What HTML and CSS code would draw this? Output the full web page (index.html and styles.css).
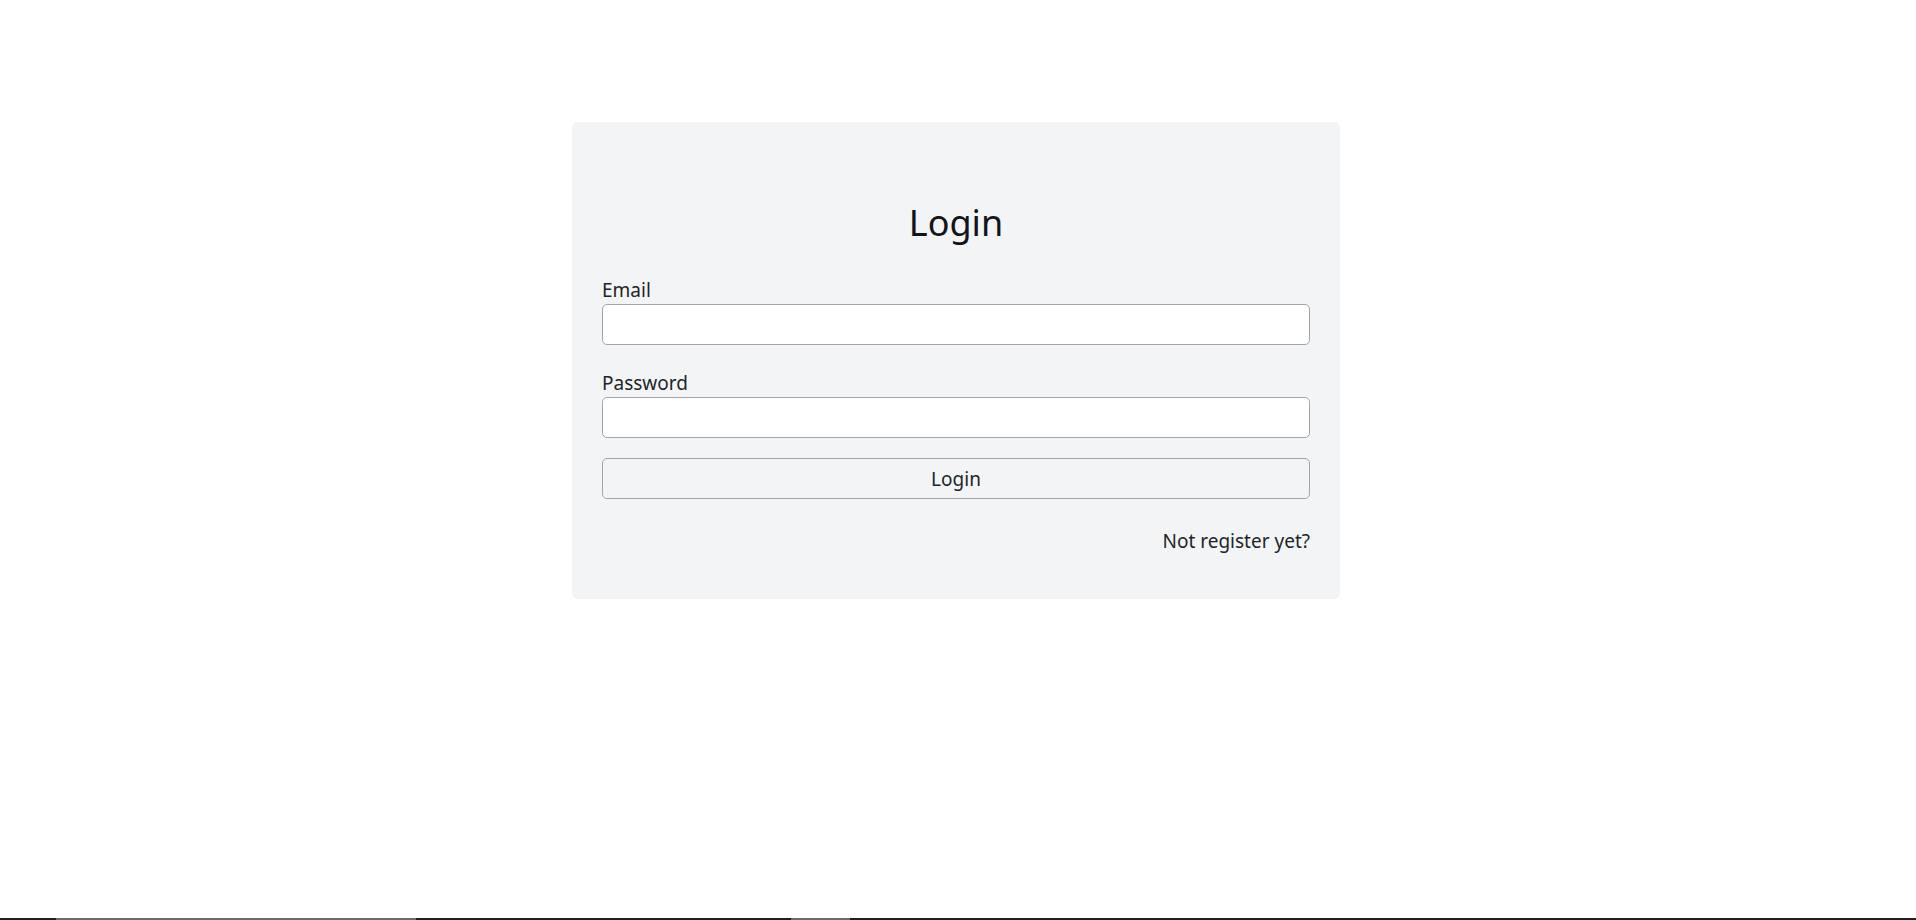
FILE: index.html
```html
<!DOCTYPE html>
<html lang="en">
<head>
<meta charset="utf-8">
<title>Login</title>
<link rel="stylesheet" href="styles.css">
</head>
<body>
<main class="page">
  <form class="card">
    <h1 class="title">Login</h1>
    <div class="field">
      <label class="label" for="email">Email</label>
      <input class="input" id="email" type="email">
    </div>
    <div class="field">
      <label class="label" for="password">Password</label>
      <input class="input" id="password" type="password">
    </div>
    <button class="btn" type="button">Login</button>
    <p class="register">Not register yet?</p>
  </form>
</main>
<div class="bottom-strip">
  <span class="seg seg-a"></span>
  <span class="seg seg-b"></span>
</div>
</body>
</html>
```

FILE: styles.css
```css
* { box-sizing: border-box; }

html, body {
  margin: 0;
  padding: 0;
  height: 100%;
  background: #ffffff;
}

body {
  display: flex;
  flex-direction: column;
  font-family: "Noto Sans", "Open Sans", sans-serif;
  font-size: 19px;
  line-height: 28px;
  color: #212529;
}

.page {
  flex: 1;
  display: flex;
  justify-content: center;
  align-items: flex-start;
  padding-top: 122px;
}

.card {
  width: 768px;
  margin: 0 4px 0 0;
  padding: 30px;
  background: #f3f4f6;
  border-radius: 6px;
  display: flex;
  flex-direction: column;
}

.title {
  margin: 47px 0 29px;
  font-size: 36px;
  line-height: 48px;
  font-weight: 400;
  text-align: center;
  color: #111418;
}

.field {
  display: flex;
  flex-direction: column;
  margin-bottom: 24px;
}

.field + .field {
  margin-bottom: 20px;
}

.label {
  display: block;
  line-height: 28px;
}

.input {
  display: block;
  width: 100%;
  height: 41px;
  margin: 0;
  padding: 6px 12px;
  font: inherit;
  background: #ffffff;
  border: 1px solid #a2a6ac;
  border-radius: 5px;
  outline: none;
}

.btn {
  display: block;
  width: 100%;
  height: 41px;
  margin: 0;
  padding: 0 12px;
  font: inherit;
  color: #212529;
  background: #f3f4f6;
  border: 1px solid #a2a6ac;
  border-radius: 5px;
  cursor: pointer;
}

.register {
  margin: 28px 0 14px;
  text-align: right;
  line-height: 28px;
}

.bottom-strip {
  height: 2px;
  background: #1f1f1f;
  display: flex;
}

.seg {
  display: block;
  height: 2px;
  background: #6b6b6b;
}

.seg-a { margin-left: 56px; width: 360px; }
.seg-b { margin-left: 375px; width: 59px; }
```
